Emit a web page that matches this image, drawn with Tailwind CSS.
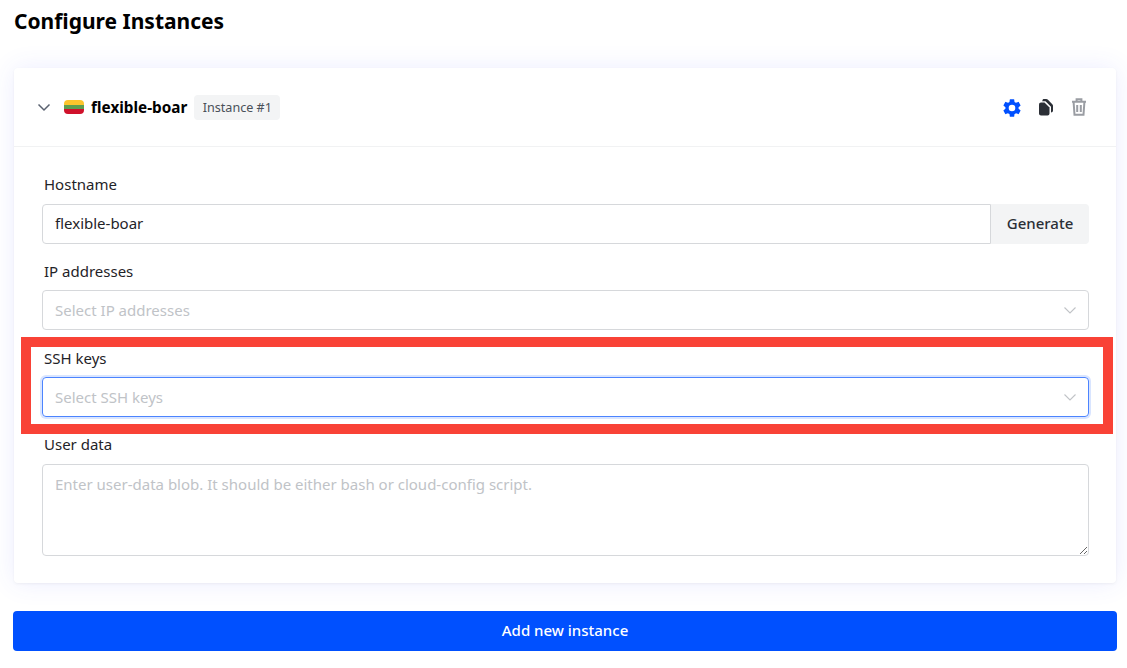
<!DOCTYPE html>
<html>
  <head>
    <meta charset="UTF-8" />
    <meta name="viewport" content="width=device-width, initial-scale=1.0" />
    <script src="https://cdn.jsdelivr.net/npm/@tailwindcss/browser@4"></script>
  </head>
  <body class="bg-white font-['Noto_Sans',sans-serif] text-[#1f2328] overflow-hidden">
    <div class="relative w-[1127px] h-[668px] pl-[13px] pr-[10px] pt-[6px]">
      <h1 class="pl-px text-[21px] leading-[30px] font-bold text-black">Configure Instances</h1>

      <div class="mt-[32px] mx-px bg-white rounded-[4px] shadow-[0_0_26px_rgba(70,80,255,0.1),0_1px_3px_rgba(0,0,0,0.05)]">
        <div class="h-[79px] flex items-center pl-[23px] pr-[27px] border-b border-[#f1f2f3]">
          <svg class="w-[14px] h-[14px] text-[#5a6270]" viewBox="0 0 14 14" fill="none" stroke="currentColor" stroke-width="1.5">
            <path d="M1.5 4.5 7 10l5.5-5.500" />
          </svg>
          <div class="ml-[13px] w-[20px] h-[14px] rounded-[4px] overflow-hidden flex flex-col">
            <div class="h-[5px] bg-[#fdc52c]"></div>
            <div class="h-[4px] bg-[#5f9e4f]"></div>
            <div class="h-[5px] bg-[#d0112b]"></div>
          </div>
          <span class="ml-[7px] text-[15.3px] font-bold text-black">flexible-boar</span>
          <span class="ml-[7px] mt-px h-[25px] w-[86px] pt-px flex items-center justify-center rounded-[4px] bg-[#f3f4f5] text-[12.6px] text-[#4a5058]">Instance #1</span>
          <div class="ml-auto flex items-center gap-[13px]">
            <svg class="w-[22px] h-[22px] mt-px text-[#0050ff]" viewBox="0 0 24 24" fill="currentColor">
              <path d="M19.14 12.94c.04-.3.06-.61.06-.94s-.02-.64-.07-.94l2.03-1.58a.49.49 0 0 0 .12-.61l-1.92-3.32a.49.49 0 0 0-.59-.22l-2.39.96a7 7 0 0 0-1.62-.94l-.36-2.54a.48.48 0 0 0-.48-.41h-3.84a.47.47 0 0 0-.47.41l-.36 2.54c-.59.24-1.13.57-1.62.94l-2.39-.96a.48.48 0 0 0-.59.22L2.74 8.87a.47.47 0 0 0 .12.61l2.03 1.58c-.05.3-.09.63-.09.94s.02.64.07.94l-2.03 1.58a.49.49 0 0 0-.12.61l1.92 3.32c.12.22.37.29.59.22l2.39-.96c.5.38 1.03.7 1.62.94l.36 2.54c.05.24.24.41.48.41h3.84c.24 0 .44-.17.47-.41l.36-2.54c.59-.24 1.13-.56 1.62-.94l2.39.96c.22.08.47 0 .59-.22l1.92-3.32a.46.46 0 0 0-.12-.61l-2.01-1.58zM12 15.6A3.6 3.6 0 1 1 12 8.4a3.6 3.6 0 0 1 0 7.2z" />
            </svg>
            <svg class="w-[20px] h-[20px] text-[#2b2f36]" viewBox="0 0 20 20" fill="currentColor">
              <path d="M3 7.500C3 6.400 3.900 5.500 5 5.500h3.500L13.500 10.500V16.500C13.500 17.600 12.600 18.500 11.500 18.500H5C3.900 18.500 3 17.600 3 16.500z" />
              <path d="M7.500 2h2.700C10.800 2 11.300 2.200 11.700 2.600L16.300 7.200C16.700 7.600 17 8.200 17 8.800V13.500C17 14.600 16.200 15.500 15 15.500V9.800L9.500 4.300H7.300C6.900 4.300 6.600 4.400 6.300 4.500 6.400 3.100 6.800 2 7.500 2z" />
            </svg>
            <svg class="w-[20px] h-[20px] text-[#9a9da3]" viewBox="0 0 20 20" fill="none" stroke="currentColor" stroke-width="2">
              <path d="M3 4.800h14M7.600 4.500V2.200h4.800v2.300M4.600 5l.9 12.800h9L15.400 5M8.200 8v7M11.800 8v7" />
            </svg>
          </div>
        </div>

        <div class="pl-[28px] pr-[27px] pt-[28px] pb-[27px]">
          <label class="block text-[15px] leading-[18px] px-[2px]">Hostname</label>
          <div class="mt-[11px] flex h-[40px]">
            <div class="flex-1 flex items-center px-[12px] pb-[2px] border border-[#d6d8db] rounded-l-[4px] text-[15px]">flexible-boar</div>
            <div class="w-[98px] flex items-center justify-center pb-[2px] bg-[#f3f4f5] rounded-r-[4px] text-[15px] font-medium text-[#2b2f36]">Generate</div>
          </div>

          <label class="block mt-[18px] text-[15px] leading-[18px] px-[2px]">IP addresses</label>
          <div class="mt-[10px] h-[40px] flex items-center justify-between px-[12px] border border-[#d6d8db] rounded-[4px] text-[15px] text-[#c0c3c7]">
            <span>Select IP addresses</span>
            <svg class="w-[12px] h-[12px]" viewBox="0 0 12 12" fill="none" stroke="currentColor" stroke-width="1.100"><path d="M.5 3.500 6 9l5.500-5.500" /></svg>
          </div>

          <label class="block mt-[19px] text-[15px] leading-[18px] px-[2px]">SSH keys</label>
          <div class="mt-[10px] h-[40px] flex items-center justify-between px-[12px] border border-[#4c84ff] rounded-[4px] shadow-[0_0_0_2px_rgba(0,80,255,0.15)] text-[15px] text-[#c0c3c7]">
            <span>Select SSH keys</span>
            <svg class="w-[12px] h-[12px]" viewBox="0 0 12 12" fill="none" stroke="currentColor" stroke-width="1.100"><path d="M.5 3.500 6 9l5.500-5.500" /></svg>
          </div>

          <label class="block mt-[18px] text-[15px] leading-[18px] px-[2px]">User data</label>
          <textarea class="block mt-[11px] w-full h-[92px] px-[12px] py-[9px] border border-[#d6d8db] rounded-[4px] text-[15px] leading-[20px] outline-none placeholder:text-[#c0c3c7]" placeholder="Enter user-data blob. It should be either bash or cloud-config script."></textarea>
        </div>
      </div>

      <button class="mt-[28px] w-full h-[40px] pb-[2px] rounded-[4px] bg-[#0050ff] text-white text-[15px] font-medium">Add new instance</button>

      <div class="absolute left-[21px] top-[337px] w-[1092px] h-[97px] border-[10px] border-[#f94236] pointer-events-none"></div>
    </div>
  </body>
</html>
